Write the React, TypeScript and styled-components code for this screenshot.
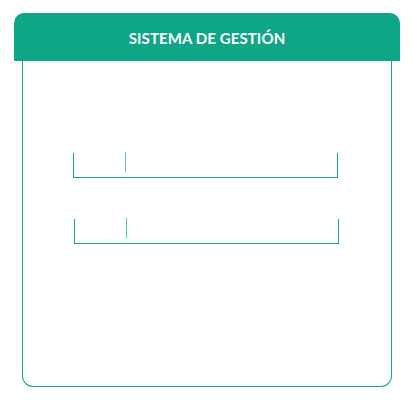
import React from "react";
import styled, { createGlobalStyle } from "styled-components";

const Global = createGlobalStyle`
  html, body { margin: 0; padding: 0; background: #ffffff; }
  body { font-family: "Lato", "Open Sans", sans-serif; }
`;

const Page = styled.div`
  padding: 13px 0 0 14px;
  width: 386px;
`;

const Header = styled.div`
  height: 48px;
  background: #0ea686;
  border-radius: 10px 10px 0 0;
  display: flex;
  align-items: center;
  justify-content: center;
  color: #ffffff;
  font-family: "Lato", sans-serif;
  font-weight: 700;
  font-size: 15px;
  letter-spacing: 0.1px;
  padding-top: 1px;
  box-sizing: border-box;
`;

const Card = styled.div`
  margin: 0 8px;
  height: 326px;
  border: 1px solid #13a688;
  border-top: none;
  border-radius: 0 0 11px 11px;
  box-sizing: border-box;
  padding: 92px 0 0 50px;
  display: flex;
  flex-direction: column;
  gap: 41px;
`;

const Field = styled.div<{ $shift: number }>`
  width: 265px;
  height: 25px;
  margin-left: ${(p) => p.$shift}px;
  border: 1px solid #13a688;
  border-top: none;
  box-sizing: border-box;
  display: flex;
  align-items: flex-start;
`;

const Prefix = styled.div`
  width: 51px;
  flex: none;
`;

const Caret = styled.div`
  width: 1px;
  height: 20px;
  margin-top: -1px;
  background: #5fc8b0;
`;

export default function App() {
  return (
    <>
      <Global />
      <Page>
        <Header>SISTEMA DE GESTIÓN</Header>
        <Card>
          <Field $shift={0}>
            <Prefix />
            <Caret />
          </Field>
          <Field $shift={1}>
            <Prefix />
            <Caret />
          </Field>
        </Card>
      </Page>
    </>
  );
}
